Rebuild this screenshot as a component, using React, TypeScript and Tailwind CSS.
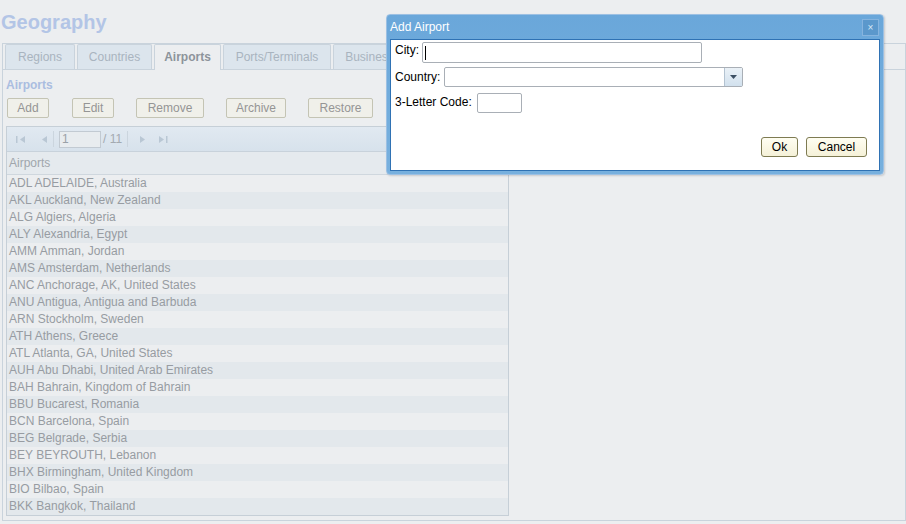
import React from "react";

const rows = [
  "ADL ADELAIDE, Australia",
  "AKL Auckland, New Zealand",
  "ALG Algiers, Algeria",
  "ALY Alexandria, Egypt",
  "AMM Amman, Jordan",
  "AMS Amsterdam, Netherlands",
  "ANC Anchorage, AK, United States",
  "ANU Antigua, Antigua and Barbuda",
  "ARN Stockholm, Sweden",
  "ATH Athens, Greece",
  "ATL Atlanta, GA, United States",
  "AUH Abu Dhabi, United Arab Emirates",
  "BAH Bahrain, Kingdom of Bahrain",
  "BBU Bucarest, Romania",
  "BCN Barcelona, Spain",
  "BEG Belgrade, Serbia",
  "BEY BEYROUTH, Lebanon",
  "BHX Birmingham, United Kingdom",
  "BIO Bilbao, Spain",
  "BKK Bangkok, Thailand",
];

const tabs = [
  { label: "Regions", w: "w-[70px]" },
  { label: "Countries", w: "w-[75px]" },
  { label: "Airports", w: "w-[67px]", active: true },
  { label: "Ports/Terminals", w: "w-[108px]" },
  { label: "Business", w: "w-[73px]" },
];

const buttons = [
  { label: "Add", w: "w-[42px]", ml: "ml-[4px]" },
  { label: "Edit", w: "w-[42px]", ml: "ml-[23px]" },
  { label: "Remove", w: "w-[68px]", ml: "ml-[22px]" },
  { label: "Archive", w: "w-[60px]", ml: "ml-[22px]" },
  { label: "Restore", w: "w-[65px]", ml: "ml-[22px]" },
];

function Tri({ dir, bar }: { dir: "l" | "r"; bar?: boolean }) {
  return (
    <svg width="10" height="9" viewBox="0 0 10 9">
      {dir === "l" ? (
        <>
          {bar && <rect x="0" y="1" width="1.5" height="7" fill="#b9c7d4" />}
          <polygon points="9,1 9,8 4,4.5" fill="#b9c7d4" />
        </>
      ) : (
        <>
          <polygon points="1,1 1,8 6,4.5" fill="#b9c7d4" />
          {bar && <rect x="8" y="1" width="1.5" height="7" fill="#b9c7d4" />}
        </>
      )}
    </svg>
  );
}

export default function App() {
  return (
    <div
      className="relative w-[906px] h-[524px] overflow-hidden bg-[#eceef0] text-[12px]"
      style={{ fontFamily: '"Liberation Sans", Arial, sans-serif' }}
    >
      {/* Title */}
      <div className="h-[43px] pt-[10px] pl-[1px] text-[20px] font-bold leading-[24px] text-[#b3c5e6]">
        Geography
      </div>

      {/* Tab panel */}
      <div className="ml-[2px] h-[478px] border border-[#c9d3dc] flex flex-col">
        <div className="h-[28px] flex items-end pl-[2px] gap-[2px] border-b border-[#c9d3dc]">
          {tabs.map((t) => (
            <div
              key={t.label}
              className={`${t.w} h-[25px] flex items-center justify-center pb-[1px] border border-b-0 border-[#c9d3dc] rounded-t-[2px] text-[12px] ${
                t.active
                  ? "bg-[#eceef0] font-bold text-[#8d949b] h-[26px] -mb-[1px]"
                  : "bg-[#dce5ed] text-[#a9b4bf]"
              }`}
            >
              {t.label}
            </div>
          ))}
        </div>

        <div className="flex-1 flex flex-col">
          <div className="pl-[3px] pt-[8px] h-[28px] text-[12px] font-bold text-[#aabde0] leading-[14px]">
            Airports
          </div>
          <div className="flex h-[28px]">
            {buttons.map((b) => (
              <div
                key={b.label}
                className={`${b.w} ${b.ml} h-[20px] flex items-center justify-center border border-[#c4c4b4] rounded-[2px] bg-[#f0f0ea] text-[12px] text-[#959595]`}
              >
                {b.label}
              </div>
            ))}
          </div>

          {/* Grid */}
          <div className="ml-[3px] w-[503px] flex-1 border border-[#c6cfd7] flex flex-col">
            <div className="h-[25px] flex items-center bg-gradient-to-b from-[#e1e9f1] to-[#d7e2ec] border-b border-[#c8d2db] pl-[8px]">
              <div className="w-[12px] flex justify-center">
                <Tri dir="l" bar />
              </div>
              <div className="ml-[11px] w-[10px] flex justify-center">
                <Tri dir="l" />
              </div>
              <div className="ml-[5px] w-[1px] h-[16px] bg-[#cbd5de]" />
              <div className="ml-[5px] w-[42px] h-[17px] border border-[#c2cad2] bg-[#e8ecef] text-[#9aa1a8] pl-[2px] leading-[15px]">
                1
              </div>
              <div className="ml-[2px] text-[#a3aab1]">/ 11</div>
              <div className="ml-[5px] w-[1px] h-[16px] bg-[#cbd5de]" />
              <div className="ml-[11px]">
                <Tri dir="r" />
              </div>
              <div className="ml-[9px]">
                <Tri dir="r" bar />
              </div>
            </div>
            <div className="h-[23px] flex items-center pl-[2px] bg-[#e5eaee] border-b border-[#cfd7de] text-[#a0a6ac]">
              Airports
            </div>
            <div className="flex flex-col">
              {rows.map((r, i) => (
                <div
                  key={r}
                  className={`h-[17px] leading-[17px] pl-[2px] text-[#979ca2] ${
                    i % 2 === 1 ? "bg-[#e3e8ec]" : "bg-[#eceef0]"
                  }`}
                >
                  {r}
                </div>
              ))}
            </div>
          </div>
          <div className="h-[4px]" />
        </div>
      </div>

      {/* Dialog */}
      <div className="absolute left-[386px] top-[14px] w-[498px] h-[161px] rounded-[4px] border border-[#9cc0e3] bg-gradient-to-b from-[#6aa7da] to-[#77b0de] shadow-[1px_1px_2px_rgba(0,0,0,0.15)] flex flex-col px-[3px] pb-[3px]">
        <div className="h-[24px] flex items-center justify-between pr-[1px]">
          <span className="text-white text-[12px]">Add Airport</span>
          <div className="w-[17px] h-[17px] mt-[1px] bg-[#5b98cc] border border-[#86b4df] flex items-center justify-center text-[#d7e8f6] text-[10px] leading-none">
            ×
          </div>
        </div>
        <div className="flex-1 bg-white border border-[#2f72b4] flex flex-col px-[4px] pt-[2px] text-black">
          <div className="flex items-start h-[21px]">
            <span className="w-[27px] leading-[14px] pt-[1px]">City:</span>
            <div className="w-[280px] h-[21px] border border-[#a9afb6] rounded-[2px] flex items-center pl-[2px]">
              <div className="w-[1px] h-[14px] bg-black" />
            </div>
          </div>
          <div className="flex items-center h-[20px] mt-[4px]">
            <span className="w-[49px] -mt-[1px]">Country:</span>
            <div className="w-[299px] h-[20px] border border-[#a9afb6] rounded-[2px] flex">
              <div className="flex-1" />
              <div className="w-[18px] h-full border-l border-[#b4c3d1] bg-gradient-to-b from-[#eaf1f7] to-[#d2e1ee] flex items-center justify-center">
                <svg width="7" height="4" viewBox="0 0 7 4">
                  <polygon points="0,0 7,0 3.5,4" fill="#3c4f63" />
                </svg>
              </div>
            </div>
          </div>
          <div className="flex items-center h-[20px] mt-[6px]">
            <span className="w-[82px] -mt-[2px]">3-Letter Code:</span>
            <div className="w-[45px] h-[20px] border border-[#a9afb6] rounded-[2px]" />
          </div>
          <div className="flex justify-end mt-[24px] pr-[8px] gap-[8px]">
            <div className="w-[37px] h-[20px] border border-[#7e7b52] rounded-[3px] bg-gradient-to-b from-[#fffef2] to-[#f5f1d8] flex items-center justify-center">
              Ok
            </div>
            <div className="w-[61px] h-[20px] border border-[#7e7b52] rounded-[3px] bg-gradient-to-b from-[#fffef2] to-[#f5f1d8] flex items-center justify-center">
              Cancel
            </div>
          </div>
        </div>
      </div>
    </div>
  );
}
